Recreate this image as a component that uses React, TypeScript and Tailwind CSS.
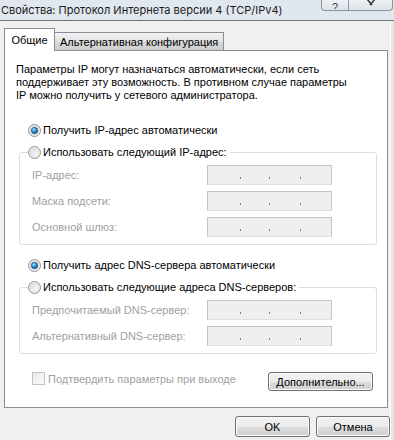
import React from "react";

const F = "font-['Liberation_Sans',Arial,sans-serif]";

function Radio({ checked }: { checked?: boolean }) {
  return (
    <svg width="13" height="13" viewBox="0 0 13 13" className="shrink-0">
      <defs>
        <linearGradient id="rgIn" x1="0" y1="0" x2="1" y2="1">
          <stop offset="0" stopColor="#dcdcdc" />
          <stop offset="1" stopColor="#fbfbfb" />
        </linearGradient>
        <radialGradient id="rgDot" cx="0.4" cy="0.35" r="0.75">
          <stop offset="0" stopColor="#a9ecff" />
          <stop offset="0.45" stopColor="#2f8ed6" />
          <stop offset="1" stopColor="#0b3c78" />
        </radialGradient>
      </defs>
      <circle cx="6.5" cy="6.5" r="6" fill="#f6f6f6" stroke="#8e8f8f" />
      <circle cx="6.5" cy="6.5" r="4.5" fill="url(#rgIn)" stroke="#cfcfcf" strokeWidth="0.6" />
      {checked && <circle cx="6.5" cy="6.5" r="3.2" fill="url(#rgDot)" stroke="#0d3f6e" strokeWidth="0.5" />}
    </svg>
  );
}

function IpBox() {
  return (
    <div className="flex h-[20px] w-[125px] items-end border border-[#c4c4c4] border-b-[#dedfe3] bg-[#efefef] pb-[5px]">
      <div className="w-[32px]" />
      <div className="h-[2px] w-[1px] bg-[#7c7c7c]" />
      <div className="w-[28px]" />
      <div className="h-[2px] w-[1px] bg-[#7c7c7c]" />
      <div className="w-[30px]" />
      <div className="h-[2px] w-[1px] bg-[#7c7c7c]" />
    </div>
  );
}

function Field({ label }: { label: string }) {
  return (
    <div className="flex h-[20px] items-center">
      <span className="w-[175px] whitespace-nowrap text-[#a0a0a0]">{label}</span>
      <IpBox />
    </div>
  );
}

const btn =
  "flex items-center justify-center whitespace-nowrap rounded-[3px] border border-[#707070] bg-[linear-gradient(#f2f2f2_0%,#ebebeb_50%,#dddddd_50%,#cfcfcf_100%)] shadow-[inset_0_0_0_1px_#fbfbfb] text-black";

export default function App() {
  return (
    <div className={`${F} h-[440px] w-[394px] overflow-hidden bg-[#f0f0f0] text-[11px] leading-[14px] text-black`}>
      {/* title bar */}
      <div className="flex h-[21px] items-start justify-between border-b border-[#6e7378] bg-[#e1e7ee]">
        <span className="ml-[1px] mt-[3px] whitespace-nowrap font-['Inter',sans-serif] text-[11px] leading-[14px] text-[#1a1a1a]">
          Свойства: Протокол Интернета версии 4 (TCP/IPv4)
        </span>
        <div className="mr-[1px] flex h-[11px] overflow-hidden rounded-b-[4px] border border-t-0 border-[#8d939a] bg-[linear-gradient(#eef1f5,#dde3ea)]">
          <div className="flex w-[27px] items-end justify-center border-r border-[#8d939a] text-[11px] leading-[11px] text-[#3a3f45]">
            <span className="-mb-[3px]">?</span>
          </div>
          <div className="flex w-[43px] items-start justify-center">
            <svg width="12" height="8" viewBox="0 0 12 8" className="-mt-[1px]">
              <path d="M2 0 L7 6 M10 0 L5 6" stroke="#3a3f45" strokeWidth="1.6" fill="none" />
            </svg>
          </div>
        </div>
      </div>

      <div className="flex">
        <div className="w-[390px]">
          {/* tabs */}
          <div className="ml-[4px] mt-[7px] flex h-[22px] items-end">
            <div className="relative z-10 -mb-[1px] flex h-[23px] w-[51px] items-start justify-center border border-b-0 border-[#898c95] bg-white pt-[4px]">
              Общие
            </div>
            <div className="-ml-[1px] flex h-[18px] w-[170px] items-center whitespace-nowrap border border-b-0 border-[#898c95] bg-[linear-gradient(#f3f3f3,#e2e2e2_50%,#d6d6d6_51%,#cfcfcf)] pl-[5px]">
              Альтернативная конфигурация
            </div>
          </div>

          {/* panel */}
          <div className="ml-[4px] flex h-[358px] w-[384px] flex-col border border-[#898c95] bg-white">
            <p className="ml-[11px] mt-[12px] whitespace-nowrap leading-[13px]">
              Параметры IP могут назначаться автоматически, если сеть
              <br />
              поддерживает эту возможность. В противном случае параметры
              <br />
              IP можно получить у сетевого администратора.
            </p>

            <div className="ml-[23px] mt-[21px] flex h-[14px] items-center gap-[2px]">
              <Radio checked />
              <span className="whitespace-nowrap">Получить IP-адрес автоматически</span>
            </div>

            <div className="ml-[14px] mt-[15px] w-[358px] rounded-[3px] border border-[#d5dfe5] pb-[7px]">
              <div className="-mt-[8px] ml-[8px] flex h-[14px] w-fit items-center gap-[2px] bg-white pr-[3px]">
                <Radio />
                <span className="whitespace-nowrap">Использовать следующий IP-адрес:</span>
              </div>
              <div className="mt-[6px] flex flex-col gap-[6px] pl-[12px]">
                <Field label="IP-адрес:" />
                <Field label="Маска подсети:" />
                <Field label="Основной шлюз:" />
              </div>
            </div>

            <div className="ml-[23px] mt-[13px] flex h-[14px] items-center gap-[2px]">
              <Radio checked />
              <span className="whitespace-nowrap">Получить адрес DNS-сервера автоматически</span>
            </div>

            <div className="ml-[14px] mt-[15px] w-[358px] rounded-[3px] border border-[#d5dfe5] pb-[7px]">
              <div className="-mt-[8px] ml-[8px] flex h-[14px] w-fit items-center gap-[2px] bg-white pr-[3px]">
                <Radio />
                <span className="whitespace-nowrap">Использовать следующие адреса DNS-серверов:</span>
              </div>
              <div className="mt-[6px] flex flex-col gap-[6px] pl-[12px]">
                <Field label="Предпочитаемый DNS-сервер:" />
                <Field label="Альтернативный DNS-сервер:" />
              </div>
            </div>

            <div className="ml-[27px] mr-[14px] mt-[18px] flex items-start justify-between">
              <div className="flex items-start gap-[3px]">
                <div className="h-[13px] w-[13px] border border-[#c3c3c3] bg-[linear-gradient(135deg,#e9e9e9,#fbfbfb)]" />
                <span className="whitespace-nowrap text-[#a0a0a0]">Подтвердить параметры при выходе</span>
              </div>
              <div className={`${btn} h-[19px] w-[105px]`}>Дополнительно...</div>
            </div>
          </div>

          {/* bottom buttons */}
          <div className="mt-[8px] flex justify-end gap-[6px]">
            <div className={`${btn} h-[21px] w-[75px]`}>OK</div>
            <div className={`${btn} h-[21px] w-[74px]`}>Отмена</div>
          </div>
        </div>
        <div className="h-[420px] w-[4px] border-l border-white bg-[#e6e6e6]" />
      </div>
    </div>
  );
}
